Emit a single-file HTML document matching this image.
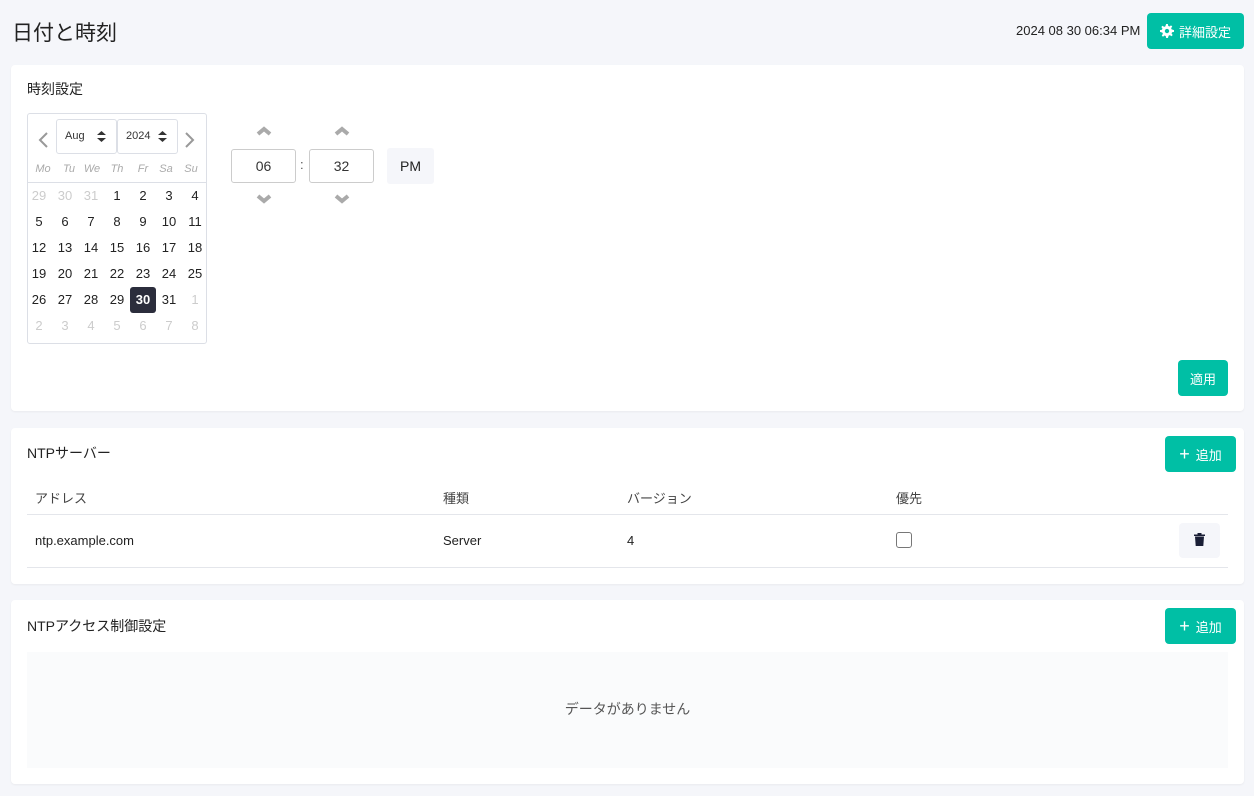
<!DOCTYPE html>
<html><head><meta charset="utf-8"><style>
*{box-sizing:border-box;margin:0;padding:0}
body{width:1254px;height:796px;background:#f5f6fa;font-family:"Liberation Sans","Noto Sans CJK JP",sans-serif;color:#222;position:relative;overflow:hidden;font-size:13px}
.a{position:absolute}
.card{position:absolute;left:11px;width:1233px;background:#fff;border-radius:4px;box-shadow:0 1px 2px rgba(0,0,0,.05)}
.btn{position:absolute;background:#00bfa5;color:#fff;border-radius:4px;display:flex;align-items:center;justify-content:center;font-size:13px}
.cal{position:absolute;left:27px;top:113px;width:180px;height:231px;border:1px solid #dcdfe6;border-radius:3px}
.c{position:absolute;width:26px;text-align:center;font-size:13px;line-height:26px}
.g{color:#ccc}
.h{color:#aaa;font-style:italic;font-size:11px}
.sel{position:absolute;top:119px;height:35px;border:1px solid #dcdfe6;border-radius:3px;font-size:11px;color:#333;padding-left:8px;line-height:33px}
.box{position:absolute;top:149px;width:65px;height:34px;border:1px solid #ccc;border-radius:3px;text-align:center;line-height:32px;font-size:14px;color:#333}
</style></head><body>
<div class="a" style="left:12px;top:17px;font-size:21px;color:#222">日付と時刻</div>
<div class="a" style="left:1016px;top:23px;font-size:13px;color:#222">2024 08 30 06:34 PM</div>
<div class="btn" style="left:1147px;top:13px;width:97px;height:36px"><svg width="14" height="14" viewBox="0 0 16 16" style="margin-right:5px"><path fill="#fff" d="M7 0h2l.4 2.2 1.4.6 1.8-1.3 1.4 1.4-1.3 1.8.6 1.4L16 7v2l-2.2.4-.6 1.4 1.3 1.8-1.4 1.4-1.800-1.3-1.4.6L9 16H7l-.4-2.2-1.4-.6-1.8 1.3-1.4-1.4 1.3-1.8-.6-1.4L0 9V7l2.2-.4.6-1.4L1.5 3.4l1.4-1.4 1.8 1.3 1.4-.6z"/><circle cx="8" cy="8" r="2.5" fill="#00bfa5"/></svg>詳細設定</div>

<div class="card" style="top:65px;height:346px"></div>
<div class="a" style="left:27px;top:79px;font-size:14px">時刻設定</div>
<div class="cal"></div>
<div class="a" style="left:27px;top:182px;width:180px;border-top:1px solid #dcdfe6"></div>
<svg class="a" style="left:37px;top:131px" width="12" height="18"><path d="M10 2L3 9l7 7" stroke="#999" stroke-width="2" fill="none"/></svg>
<svg class="a" style="left:184px;top:131px" width="12" height="18"><path d="M2 2l7 7-7 7" stroke="#999" stroke-width="2" fill="none"/></svg>
<div class="sel" style="left:56px;width:61px">Aug</div>
<div class="sel" style="left:117px;width:61px">2024</div>
<svg class="a" style="left:97px;top:131px" width="9" height="11"><path d="M0 4l4.5-4 4.5 4zM0 7l4.5 4 4.5-4z" fill="#333"/></svg>
<svg class="a" style="left:158px;top:131px" width="9" height="11"><path d="M0 4l4.5-4 4.5 4zM0 7l4.5 4 4.5-4z" fill="#333"/></svg>
<div class="a" style="left:27px;top:156px">
<div class="c h" style="left:3px">Mo</div><div class="c h" style="left:29px">Tu</div><div class="c h" style="left:52px">We</div><div class="c h" style="left:77px">Th</div><div class="c h" style="left:103px">Fr</div><div class="c h" style="left:126px">Sa</div><div class="c h" style="left:151px">Su</div>
</div>
<div class="a" style="left:26px;top:183px">
<div class="c g" style="left:0;top:0">29</div><div class="c g" style="left:26px;top:0">30</div><div class="c g" style="left:52px;top:0">31</div><div class="c" style="left:78px;top:0">1</div><div class="c" style="left:104px;top:0">2</div><div class="c" style="left:130px;top:0">3</div><div class="c" style="left:156px;top:0">4</div>
<div class="c" style="left:0;top:26px">5</div><div class="c" style="left:26px;top:26px">6</div><div class="c" style="left:52px;top:26px">7</div><div class="c" style="left:78px;top:26px">8</div><div class="c" style="left:104px;top:26px">9</div><div class="c" style="left:130px;top:26px">10</div><div class="c" style="left:156px;top:26px">11</div>
<div class="c" style="left:0;top:52px">12</div><div class="c" style="left:26px;top:52px">13</div><div class="c" style="left:52px;top:52px">14</div><div class="c" style="left:78px;top:52px">15</div><div class="c" style="left:104px;top:52px">16</div><div class="c" style="left:130px;top:52px">17</div><div class="c" style="left:156px;top:52px">18</div>
<div class="c" style="left:0;top:78px">19</div><div class="c" style="left:26px;top:78px">20</div><div class="c" style="left:52px;top:78px">21</div><div class="c" style="left:78px;top:78px">22</div><div class="c" style="left:104px;top:78px">23</div><div class="c" style="left:130px;top:78px">24</div><div class="c" style="left:156px;top:78px">25</div>
<div class="c" style="left:0;top:104px">26</div><div class="c" style="left:26px;top:104px">27</div><div class="c" style="left:52px;top:104px">28</div><div class="c" style="left:78px;top:104px">29</div><div class="c" style="left:104px;top:104px;background:#2b2d3c;color:#fff;border-radius:3px;font-weight:bold">30</div><div class="c" style="left:130px;top:104px">31</div><div class="c g" style="left:156px;top:104px">1</div>
<div class="c g" style="left:0;top:130px">2</div><div class="c g" style="left:26px;top:130px">3</div><div class="c g" style="left:52px;top:130px">4</div><div class="c g" style="left:78px;top:130px">5</div><div class="c g" style="left:104px;top:130px">6</div><div class="c g" style="left:130px;top:130px">7</div><div class="c g" style="left:156px;top:130px">8</div>
</div>
<svg class="a" style="left:256px;top:126px" width="16" height="10"><path d="M2 8l6-5 6 5" stroke="#aaa" stroke-width="4" fill="none"/></svg>
<svg class="a" style="left:334px;top:126px" width="16" height="10"><path d="M2 8l6-5 6 5" stroke="#aaa" stroke-width="4" fill="none"/></svg>
<svg class="a" style="left:256px;top:194px" width="16" height="10"><path d="M2 2l6 5 6-5" stroke="#aaa" stroke-width="4" fill="none"/></svg>
<svg class="a" style="left:334px;top:194px" width="16" height="10"><path d="M2 2l6 5 6-5" stroke="#aaa" stroke-width="4" fill="none"/></svg>
<div class="box" style="left:231px">06</div>
<div class="a" style="left:300px;top:157px;color:#555">:</div>
<div class="box" style="left:309px">32</div>
<div class="a" style="left:387px;top:148px;width:47px;height:36px;background:#f5f6fa;border-radius:3px;text-align:center;line-height:36px;font-size:14px">PM</div>
<div class="btn" style="left:1178px;top:360px;width:50px;height:36px">適用</div>

<div class="card" style="top:428px;height:156px"></div>
<div class="a" style="left:27px;top:443px;font-size:14px">NTPサーバー</div>
<div class="btn" style="left:1165px;top:436px;width:71px;height:36px"><span style="font-size:18px;margin-right:6px;line-height:1">+</span>追加</div>
<div class="a" style="left:35px;top:488px;color:#444">アドレス</div>
<div class="a" style="left:443px;top:488px;color:#444">種類</div>
<div class="a" style="left:627px;top:488px;color:#444">バージョン</div>
<div class="a" style="left:896px;top:488px;color:#444">優先</div>
<div class="a" style="left:27px;top:514px;width:1201px;border-top:1px solid #e4e6eb"></div>
<div class="a" style="left:35px;top:533px">ntp.example.com</div>
<div class="a" style="left:443px;top:533px">Server</div>
<div class="a" style="left:627px;top:533px">4</div>
<div class="a" style="left:896px;top:532px;width:16px;height:16px;border:1px solid #777;border-radius:3px"></div>
<div class="a" style="left:1179px;top:523px;width:41px;height:35px;background:#f5f6fa;border-radius:4px"></div>
<svg class="a" style="left:1194px;top:533px" width="11" height="13"><path d="M0 1.5h11v1.5H0zM3.5 0h4v1.5h-4zM1 3.5h9l-.7 9.5H1.7z" fill="#1a1f36"/></svg>
<div class="a" style="left:27px;top:567px;width:1201px;border-top:1px solid #e4e6eb"></div>

<div class="card" style="top:600px;height:184px"></div>
<div class="a" style="left:27px;top:616px;font-size:14px">NTPアクセス制御設定</div>
<div class="btn" style="left:1165px;top:608px;width:71px;height:36px"><span style="font-size:18px;margin-right:6px;line-height:1">+</span>追加</div>
<div class="a" style="left:27px;top:652px;width:1201px;height:116px;background:#fafbfc;text-align:center;line-height:114px;font-size:14px;color:#555">データがありません</div>
</body></html>
